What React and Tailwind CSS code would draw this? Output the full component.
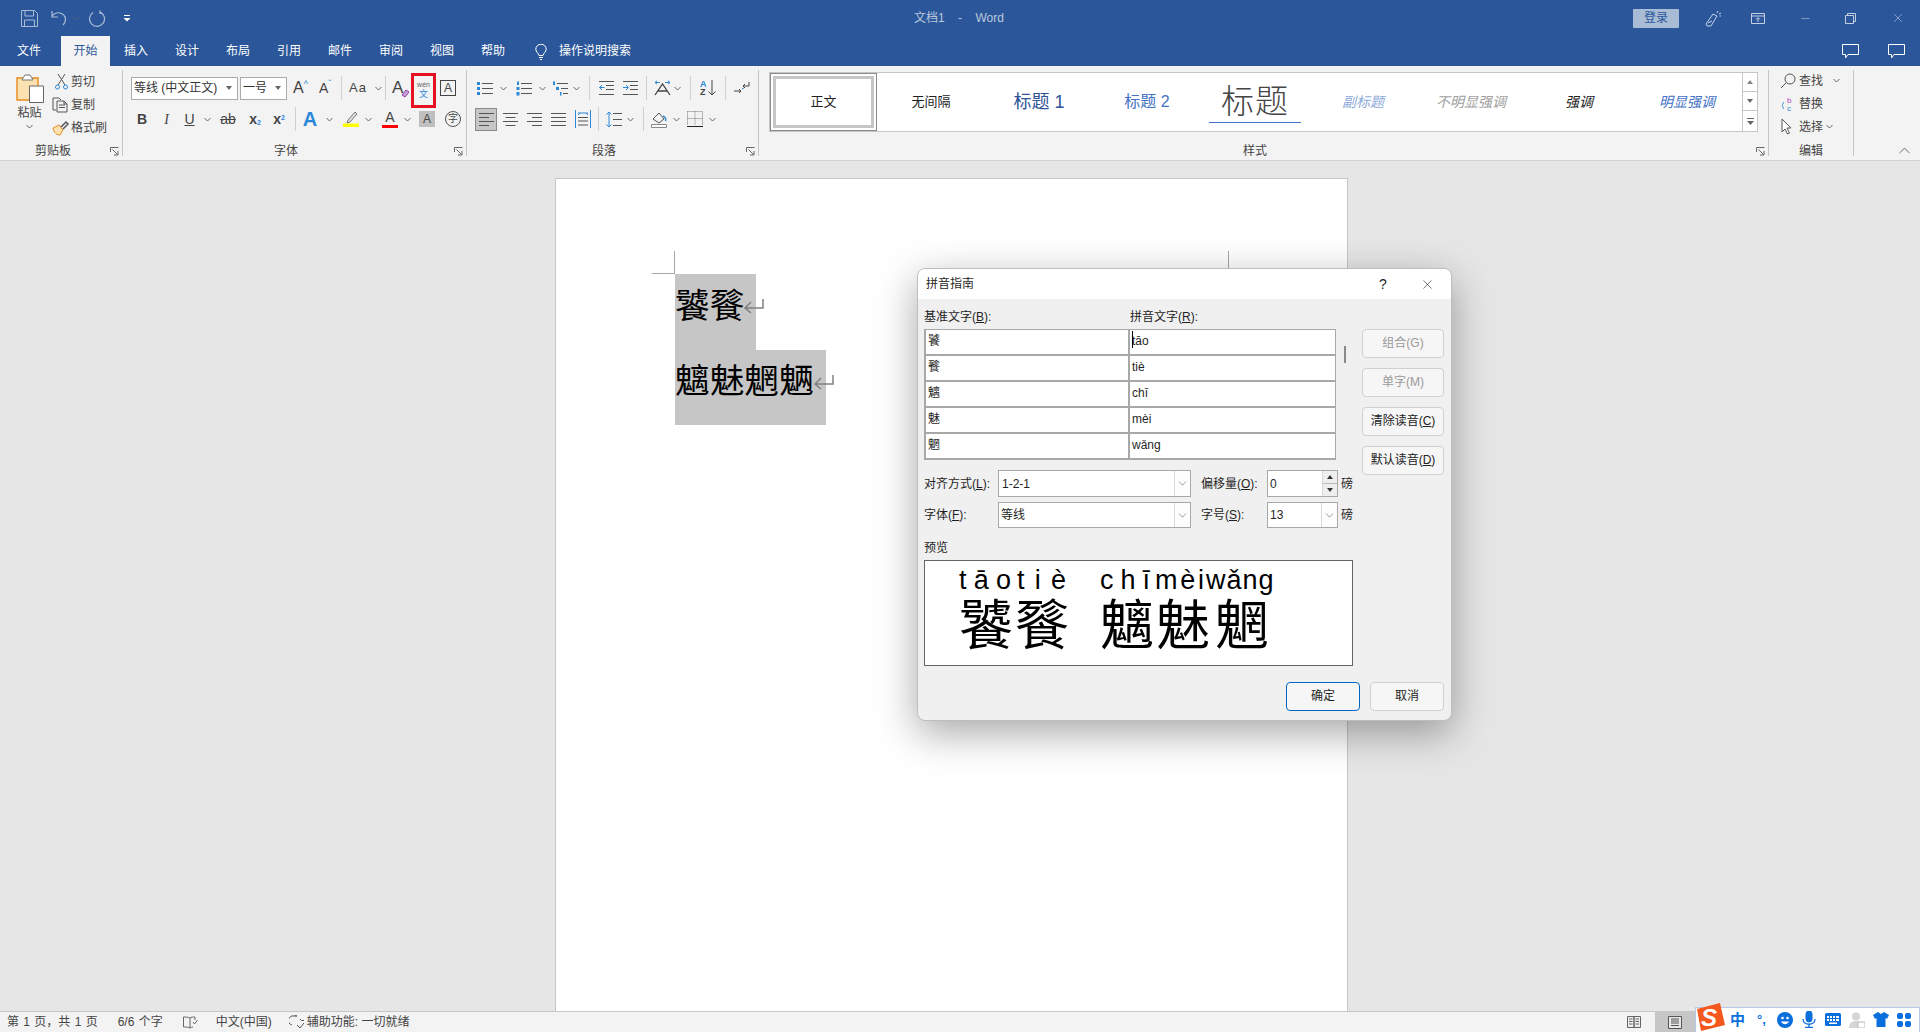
import React from "react";
import { ChevronDown, ChevronUp, X, Minus } from "lucide-react";

const FONT = "font-['Liberation_Sans','Noto_Sans_CJK_SC',sans-serif]";

const Chev = ({ className = "" }) => (
  <svg width="7" height="5" viewBox="0 0 7 5" className={`shrink-0 ${className}`} fill="none" stroke="#666" strokeWidth="1">
    <path d="M.5 1 3.5 4 6.5 1" />
  </svg>
);

const Sep = ({ h = "h-[86px]" }) => <div className={`${h} w-px bg-[#c6c6c6] shrink-0`}></div>;
const Tiny = () => <div className="h-[24px] w-px bg-[#d0d0d0] shrink-0"></div>;

const Launcher = () => (
  <svg width="9" height="9" viewBox="0 0 9 9" className="absolute right-[3px] top-[7px]" fill="none" stroke="#666" strokeWidth="1">
    <path d="M.5 5V.5H8.5M2.5 2.5 7.5 7.5M4 8H8V4" />
  </svg>
);

const Group = ({ label, w, pad = "pr-[17px]", children }) => (
  <div className={`flex flex-col h-[90px] shrink-0 ${w}`}>
    <div className="flex-1 min-h-0">{children}</div>
    <div className={`relative h-[20px] text-center text-[12px] leading-[22px] text-[#444] ${pad}`}>
      {label}
      <Launcher />
    </div>
  </div>
);

const Tabs = ["插入", "设计", "布局", "引用", "邮件", "审阅", "视图", "帮助"];

function TitleBar() {
  return (
    <div className="h-[36px] bg-[#2b579a] flex items-center shrink-0 text-[#b4c5dd]">
      <svg width="17" height="17" viewBox="0 0 17 17" className="ml-[21px]" fill="none" stroke="#a9bcd6" strokeWidth="1">
        <path d="M.5.5H13.5L16.5 3.5V16.5H.5ZM4 .5V6H12.5V.5M3.5 16.5V10H13.5V16.5" />
      </svg>
      <svg width="17" height="16" viewBox="0 0 17 16" className="ml-[13px]" fill="none" stroke="#a9bcd6" strokeWidth="1.2">
        <path d="M1 1V7H7M1 6.5C3 3 7 2 10.5 3.5 15 5.5 16 10.5 12 15" />
      </svg>
      <Chev className="ml-[4px] opacity-70" />
      <svg width="17" height="17" viewBox="0 0 17 17" className="ml-[10px]" fill="none" stroke="#a9bcd6" strokeWidth="1.2">
        <path d="M11.5 2.2A7.5 7.5 0 1 1 4 2.5M11 .5V3.5H14" />
      </svg>
      <svg width="8" height="8" viewBox="0 0 8 8" className="ml-[17px]" fill="#fff">
        <path d="M1 1H7V2H1ZM.5 4H7.5L4 7.5Z" />
      </svg>
      <div className="ml-[753px] w-[150px] text-center text-[12px] text-[#b9c8de] whitespace-pre">文档1    -    Word</div>
      <div className="ml-[599px] w-[46px] h-[19px] bg-[#a9bcd6] rounded-[1px] text-center text-[12px] leading-[19px] text-[#2b579a]">登录</div>
      <svg width="17" height="17" viewBox="0 0 17 17" className="ml-[26px]" fill="none" stroke="#c3d0e3" strokeWidth="1">
        <path d="M1 14 8 4 12 6 6 16 2 16ZM13 1 12 3M16 3 14 4M16 6H14.5M3 13 7 11" />
      </svg>
      <svg width="14" height="11" viewBox="0 0 14 11" className="ml-[29px]" fill="none" stroke="#c3d0e3" strokeWidth="1">
        <path d="M.5.5H13.5V10.5H.5ZM.5 3H13.5M7 9V5M5 6.5 7 4.5 9 6.5" />
      </svg>
      <Minus size={13} strokeWidth={1} color="#c3d0e3" className="ml-[34px]" />
      <svg width="11" height="11" viewBox="0 0 11 11" className="ml-[33px]" fill="none" stroke="#c3d0e3" strokeWidth="1">
        <path d="M.5 2.5H8.5V10.5H.5ZM2.5 2.5V.5H10.5V8.5H8.5" />
      </svg>
      <X size={14} strokeWidth={1} color="#c3d0e3" className="ml-[35px]" />
    </div>
  );
}

function TabBar() {
  return (
    <div className="h-[30px] bg-[#2b579a] flex items-stretch text-[12px] text-white shrink-0">
      <div className="w-[61px] pl-[17px] leading-[30px]">文件</div>
      <div className="w-[49px] bg-[#f3f3f3] text-[#2b579a] text-center leading-[30px]">开始</div>
      <div className="flex pl-[14px]">
        {Tabs.map((t) => (
          <div key={t} className="w-[51px] leading-[30px]">{t}</div>
        ))}
      </div>
      <svg width="12" height="16" viewBox="0 0 12 16" className="ml-[3px] mt-[8px]" fill="none" stroke="#fff" strokeWidth="1">
        <path d="M4 11.5C3.5 9 .8 8 .8 5.2A5.2 5 0 0 1 11.2 5.2C11.2 8 8.5 9 8 11.5ZM4 13.5H8M5 15.5H7" />
      </svg>
      <div className="ml-[12px] leading-[30px] text-[#fff]">操作说明搜索</div>
      <svg width="17" height="15" viewBox="0 0 17 15" className="ml-[1211px] mt-[8px]" fill="none" stroke="#fff" strokeWidth="1">
        <path d="M.5.5H16.5V10.5H6L3.5 14V10.5H.5Z" />
      </svg>
      <svg width="17" height="15" viewBox="0 0 17 15" className="ml-[29px] mt-[8px]" fill="none" stroke="#fff" strokeWidth="1">
        <path d="M.5.5H16.5V10.5H6L3.5 14V10.5H.5Z" />
      </svg>
    </div>
  );
}

function Clipboard() {
  return (
    <Group label="剪贴板" w="w-[118px]" pad="pr-[20px]">
      <div className="flex pl-[7px] h-full">
        <div className="w-[37px] flex flex-col items-center text-[12px] text-[#444]">
          <svg width="28" height="30" viewBox="0 0 28 30" className="mt-[3px]" fill="none">
            <path d="M1 5H22V27H1Z" fill="#fbe2b0" stroke="#e8891c" strokeWidth="1.4" />
            <path d="M7 5 9 2H14L16 5 17 7H6Z" fill="#fff" stroke="#777" />
            <path d="M13.5 13H27.5V29.5H13.5Z" fill="#fff" stroke="#666" />
          </svg>
          <div className="leading-[16px] mt-[2px]">粘贴</div>
          <Chev className="mt-[3px]" />
        </div>
        <div className="pl-[4px] text-[12px] text-[#444]">
          <div className="flex items-center h-[23px]">
            <svg width="16" height="17" viewBox="0 0 16 17" fill="none" className="ml-[2px]">
              <path d="M4 1 11 12M11 1 4 12" stroke="#555" />
              <circle cx="3.5" cy="14" r="2" stroke="#2b88d8" />
              <circle cx="11.5" cy="14" r="2" stroke="#2b88d8" />
            </svg>
            <span className="ml-[1px]">剪切</span>
          </div>
          <div className="flex items-center h-[23px]">
            <svg width="17" height="16" viewBox="0 0 17 16" fill="none" stroke="#555">
              <path d="M4 13H1V1H7L9 3M5 4H12L15 7V15H5ZM7 8H13M7 10.500H13M12 4V7H15" />
            </svg>
            <span className="ml-[2px]">复制</span>
          </div>
          <div className="flex items-center h-[23px]">
            <svg width="17" height="16" viewBox="0 0 17 16" fill="none">
              <path d="M1 8 7 5 11 10 8 15C5 15 2 13 1 8Z" fill="#fbe2b0" stroke="#e8891c" />
              <path d="M9 7 14 2 16 4 11 9" stroke="#555" strokeWidth="1.5" />
            </svg>
            <span className="ml-[2px]">格式刷</span>
          </div>
        </div>
      </div>
    </Group>
  );
}

function FontGroup() {
  return (
    <Group label="字体" w="w-[343px]">
      <div className="flex items-center h-[36px] pl-[8px] text-[#444]">
        <div className="w-[107px] h-[23px] bg-white border border-[#ababab] flex items-center pl-[2px] text-[12px] text-[#333] whitespace-nowrap">
          等线 (中文正文)
          <svg width="6" height="4" viewBox="0 0 6 4" className="ml-auto mr-[5px]" fill="#666"><path d="M0 0H6L3 4Z" /></svg>
        </div>
        <div className="w-[47px] h-[23px] ml-[2px] bg-white border border-[#ababab] flex items-center pl-[2px] text-[12px] text-[#333]">
          一号
          <svg width="6" height="4" viewBox="0 0 6 4" className="ml-auto mr-[5px]" fill="#666"><path d="M0 0H6L3 4Z" /></svg>
        </div>
        <div className="w-[23px] ml-[6px] flex items-start text-[16px] leading-[16px]">A<span className="text-[9px] leading-[9px] text-[#2b88d8]">^</span></div>
        <div className="w-[22px] ml-[3px] flex items-start text-[14px] leading-[16px]">A<span className="text-[9px] leading-[7px] text-[#2b88d8]">ˇ</span></div>
        <Tiny />
        <div className="ml-[7px] w-[26px] text-[13px] tracking-[1px]">Aa</div>
        <Chev />
        <div className="ml-[3px]"><Tiny /></div>
        <div className="relative ml-[6px] w-[20px] text-[17px] leading-[18px]">
          A
          <svg width="9" height="9" viewBox="0 0 9 9" className="absolute left-[9px] top-[10px]" fill="#c79dd6" stroke="#8e44ad"><path d="M1 6 5 1 8 3 4 8Z" /></svg>
        </div>
        <div className="ml-[-1px] w-[25px] h-[35px] border-[3px] border-[#e81123] flex flex-col items-center justify-center mt-[4px]">
          <span className="text-[7px] leading-[8px] text-[#666]">wén</span>
          <span className="text-[9px] leading-[10px] text-[#2b88d8]">文</span>
        </div>
        <div className="ml-[4px] w-[16px] h-[16px] border border-[#444] text-center text-[12px] leading-[14px]">A</div>
      </div>
      <div className="flex items-center h-[26px] text-[#444]">
        <div className="w-[26px] ml-[6px] text-center text-[14px] font-bold">B</div>
        <div className="w-[23px] text-center text-[14px] italic font-['Liberation_Serif',serif]">I</div>
        <div className="w-[23px] text-center text-[14px] underline">U</div>
        <Chev className="ml-[3px]" />
        <div className="w-[30px] ml-[2px] text-center text-[14px] line-through">ab</div>
        <div className="w-[24px] text-center text-[14px] font-bold">x<sub className="text-[7px] text-[#2b88d8]">2</sub></div>
        <div className="w-[24px] text-center text-[14px] font-bold">x<sup className="text-[7px] text-[#2b88d8]">2</sup></div>
        <div className="w-[1px] h-[24px] bg-[#d0d0d0] ml-[4px]"></div>
        <div className="w-[30px] ml-[-1px] text-center text-[20px] leading-[20px] font-bold text-[#2b88d8]">A</div>
        <Chev className="ml-[1px]" />
        <svg width="16" height="16" viewBox="0 0 16 16" className="ml-[10px]" fill="none">
          <path d="M5 9 12 1 14 3 7 11 4 12Z" fill="#ddd" stroke="#777" />
          <path d="M0 12.500H16V16H0Z" fill="#ffff00" />
        </svg>
        <Chev className="ml-[6px]" />
        <div className="flex flex-col items-center w-[16px] ml-[10px]">
          <span className="text-[14px] leading-[13px]">A</span>
          <span className="w-[16px] h-[3px] bg-[#ff0000] mt-[1px]"></span>
        </div>
        <Chev className="ml-[6px]" />
        <div className="ml-[8px] w-[16px] h-[16px] bg-[#bfbfbf] text-center text-[12px] leading-[16px]">A</div>
        <div className="ml-[10px] w-[16px] h-[16px] rounded-full border border-[#555] text-center text-[10px] leading-[14px]">字</div>
      </div>
    </Group>
  );
}

const Bullets = () => (
  <svg width="16" height="15" viewBox="0 0 16 15" fill="none">
    <path d="M0 1H3V4H0ZM0 6H3V9H0ZM0 11H3V14H0Z" fill="#2b88d8" />
    <path d="M5 2.500H16M5 7.500H16M5 12.500H16" stroke="#555" />
  </svg>
);
const Numbered = () => (
  <svg width="16" height="15" viewBox="0 0 16 15" fill="none">
    <path d="M1 0.500H3V4H1ZM0.500 6H3.500V9H0.500ZM0.500 11H3.500V14.500H0.500Z" fill="#2b88d8" />
    <path d="M5 2.500H16M5 7.500H16M5 12.500H16" stroke="#555" />
  </svg>
);
const Multi = () => (
  <svg width="16" height="15" viewBox="0 0 16 15" fill="none">
    <path d="M1 0.500H3V4H1ZM4 6H7V9H4ZM8 11H9.500V14.500H8Z" fill="#2b88d8" />
    <path d="M5 2.500H16M9 7.500H16M11 12.500H16" stroke="#555" />
  </svg>
);
const Indent = ({ flip }) => (
  <svg width="15" height="14" viewBox="0 0 15 14" fill="none">
    <path d="M0 .5H15M7 4.500H15M7 8.500H15M0 13.500H15" stroke="#555" />
    {flip ? (
      <path d="M0 6.500H5M3 4 5.500 6.500 3 9" stroke="#2b88d8" />
    ) : (
      <path d="M5.500 6.500H.5M3 4 .5 6.500 3 9" stroke="#2b88d8" />
    )}
  </svg>
);
const Align = ({ lines }) => (
  <svg width="15" height="14" viewBox="0 0 15 14" fill="none" stroke="#555">
    <path d={lines} />
  </svg>
);

function ParaGroup() {
  return (
    <Group label="段落" w="w-[291px]">
      <div className="flex items-center h-[36px] text-[#444]">
        <div className="ml-[10px]"><Bullets /></div>
        <Chev className="ml-[7px]" />
        <div className="ml-[9px]"><Numbered /></div>
        <Chev className="ml-[7px]" />
        <div className="ml-[6px]"><Multi /></div>
        <Chev className="ml-[5px]" />
        <div className="ml-[9px]"><Tiny /></div>
        <div className="ml-[9px]"><Indent /></div>
        <div className="ml-[9px]"><Indent flip /></div>
        <div className="ml-[8px]"><Tiny /></div>
        <svg width="17" height="16" viewBox="0 0 17 16" className="ml-[7px]" fill="none">
          <path d="M1 2.500H6M1 2.500 3 .8M1 2.500 3 4.200M11 2.500H16M16 2.500 14 .8M16 2.500 14 4.200" stroke="#2b88d8" />
          <path d="M1 15 8.500 4 16 15M4 11H13" stroke="#444" strokeWidth="1.3" />
        </svg>
        <Chev className="ml-[3px]" />
        <div className="ml-[9px]"><Tiny /></div>
        <div className="ml-[9px] w-[18px] flex items-center">
          <span className="text-[9px] leading-[8px] font-bold"><span className="text-[#2b88d8]">A</span><br />Z</span>
          <svg width="8" height="16" viewBox="0 0 8 16" fill="none" stroke="#444" className="ml-[1px]"><path d="M4 0V15M.5 11.500 4 15 7.500 11.500" /></svg>
        </div>
        <div className="ml-[7px]"><Tiny /></div>
        <svg width="17" height="15" viewBox="0 0 17 15" className="ml-[7px]" fill="none" stroke="#444">
          <path d="M16 1V5H10M12 3 10 5 12 7M1 10H8M6 8 8 10 6 12" />
          <path d="M9 8 11 7" stroke="#2b88d8" />
        </svg>
      </div>
      <div className="flex items-center h-[26px]">
        <div className="ml-[8px] w-[22px] h-[23px] bg-[#c6c6c6] border border-[#8a8a8a] flex items-center justify-center">
          <Align lines="M0 1.500H15M0 5.500H10M0 9.500H15M0 13.500H10" />
        </div>
        <div className="ml-[6px]"><Align lines="M0 1.500H15M2.500 5.500H12.500M0 9.500H15M2.500 13.500H12.500" /></div>
        <div className="ml-[9px]"><Align lines="M0 1.500H15M5 5.500H15M0 9.500H15M5 13.500H15" /></div>
        <div className="ml-[9px]"><Align lines="M0 1.500H15M0 5.500H15M0 9.500H15M0 13.500H15" /></div>
        <svg width="16" height="18" viewBox="0 0 16 18" className="ml-[9px]" fill="none">
          <path d="M.5 0V18M15.500 0V18" stroke="#2b88d8" />
          <path d="M3 3H13M5 3 3 5M11 3 13 5" stroke="#2b88d8" />
          <path d="M3 7.500H13M3 11H13M3 15H13" stroke="#555" />
        </svg>
        <div className="ml-[7px]"><Tiny /></div>
        <svg width="16" height="17" viewBox="0 0 16 17" className="ml-[7px]" fill="none">
          <path d="M3 1V16M.5 3.500 3 1 5.500 3.500M.5 13.500 3 16 5.500 13.500" stroke="#2b88d8" />
          <path d="M7 2.500H16M7 8.500H16M7 14.500H16" stroke="#555" />
        </svg>
        <Chev className="ml-[5px]" />
        <div className="ml-[9px]"><Tiny /></div>
        <svg width="16" height="17" viewBox="0 0 16 17" className="ml-[7px]" fill="none">
          <path d="M2 8 8 2 13 8 8 12Z" stroke="#555" />
          <path d="M12 5C15 6 15 9 14.500 10" stroke="#2b88d8" strokeWidth="1.5" />
          <path d="M.5 13.500H15.500V16.500H.5Z" fill="#fff" stroke="#888" />
        </svg>
        <Chev className="ml-[6px]" />
        <svg width="16" height="16" viewBox="0 0 16 16" className="ml-[7px]" fill="none">
          <path d="M.5.5H15.500V14M.5.500V14M8 .5V14M.5 7.500H15.500" stroke="#777" strokeDasharray="1 1" />
          <path d="M0 15.500H16" stroke="#222" />
        </svg>
        <Chev className="ml-[6px]" />
      </div>
    </Group>
  );
}

const Styles = [
  ["无间隔", "text-[13px] text-[#222]"],
  ["标题 1", "text-[18px] text-[#2f5496]"],
  ["标题 2", "text-[16px] text-[#4472c4]"],
  ["标题", "text-[33px] font-light text-[#444] tracking-[1px]"],
  ["副标题", "text-[14px] italic text-[#8eaadb]"],
  ["不明显强调", "text-[14px] italic text-[#a0a0a0]"],
  ["强调", "text-[14px] italic text-[#222]"],
  ["明显强调", "text-[14px] italic text-[#4472c4]"],
];

function StylesGroup() {
  return (
    <Group label="样式" w="w-[1009px]">
      <div className="flex mt-[2px] ml-[10px] h-[60px] w-[989px] bg-white border border-[#c6c6c6]">
        <div className="w-[107px] h-full bg-white border border-[#8a8a8a] flex items-center justify-center shrink-0">
          <div className="w-[101px] h-[52px] border-[3px] border-[#c6c6c6] text-center text-[13px] leading-[46px] text-[#222]">正文</div>
        </div>
        {Styles.map(([t, c]) => (
          <div key={t} className={`w-[108px] shrink-0 flex items-center justify-center whitespace-nowrap ${c}`}>
            {t === "标题" ? <span className="border-b-[1.500px] border-[#4472c4] px-[12px] leading-[40px]">{t}</span> : t}
          </div>
        ))}
        <div className="ml-auto w-[15px] shrink-0 flex flex-col border-l border-[#c6c6c6]">
          <div className="h-[19px] border-b border-[#c6c6c6] flex items-center justify-center">
            <svg width="6" height="4" viewBox="0 0 6 4" fill="#888"><path d="M0 4H6L3 0Z" /></svg>
          </div>
          <div className="h-[19px] border-b border-[#c6c6c6] flex items-center justify-center">
            <svg width="6" height="4" viewBox="0 0 6 4" fill="#666"><path d="M0 0H6L3 4Z" /></svg>
          </div>
          <div className="flex-1 flex items-center justify-center">
            <svg width="7" height="7" viewBox="0 0 7 7" fill="#666"><path d="M0 0H7V1H0ZM0 3H7L3.500 7Z" /></svg>
          </div>
        </div>
      </div>
    </Group>
  );
}

function EditGroup() {
  return (
    <div className="flex flex-col h-[90px] w-[84px] shrink-0 text-[12px] text-[#444]">
      <div className="flex-1 pl-[11px] mt-[-1px]">
        <div className="flex items-center h-[23px]">
          <svg width="16" height="16" viewBox="0 0 16 16" fill="none" stroke="#555">
            <circle cx="10" cy="6" r="5" />
            <path d="M6 10 1 15" />
          </svg>
          <span className="ml-[3px]">查找</span>
          <Chev className="ml-[10px]" />
        </div>
        <div className="flex items-center h-[23px]">
          <svg width="16" height="16" viewBox="0 0 16 16" fill="none">
            <path d="M4 6C2 8 2 11 4 13" stroke="#2b88d8" />
            <text x="7" y="7" fontSize="8" fill="#b146c2">b</text>
            <text x="7" y="15" fontSize="8" fill="#2b88d8">c</text>
          </svg>
          <span className="ml-[3px]">替换</span>
        </div>
        <div className="flex items-center h-[23px]">
          <svg width="12" height="17" viewBox="0 0 12 17" fill="#fff" stroke="#555" className="ml-[1px]">
            <path d="M1 1V14L4 11 6.500 16 8.500 15 6 10H10Z" />
          </svg>
          <span className="ml-[6px]">选择</span>
          <Chev className="ml-[3px]" />
        </div>
      </div>
      <div className="h-[20px] text-center leading-[22px]">编辑</div>
    </div>
  );
}

function Ribbon() {
  return (
    <div className="h-[95px] bg-[#f3f3f3] border-b border-[#d2d2d2] flex shrink-0 pt-[4px]">
      <div className="w-[4px] shrink-0"></div>
      <Clipboard />
      <Sep />
      <FontGroup />
      <Sep />
      <ParaGroup />
      <Sep />
      <StylesGroup />
      <Sep />
      <EditGroup />
      <Sep />
      <div className="flex-1 flex items-end pl-[41px]">
        <ChevronUp size={19} strokeWidth={1} color="#444" />
      </div>
    </div>
  );
}

const ReturnMark = () => (
  <svg width="20" height="16" viewBox="0 0 20 16" fill="none" stroke="#808080" strokeWidth="1.500" className="shrink-0">
    <path d="M19 1V10H1M7 4 1 10 7 15" />
  </svg>
);

function Page() {
  return (
    <div className="relative ml-[555px] mt-[17px] w-[793px] h-[900px] bg-white border border-[#c6c6c6] border-b-0 pl-[119px] pt-[95px]">
      <div className="absolute left-[96px] top-[72px] w-[23px] h-[23px] border-r border-b border-[#a6a6a6]"></div>
      <div className="absolute left-[672px] top-[72px] w-[1px] h-[23px] bg-[#a6a6a6]"></div>
      <div className={`w-[81px] h-[76px] pb-[12px] bg-[#c6c6c6] flex items-center text-[34.670px] text-black leading-none whitespace-nowrap ${FONT}`}>
        饕餮
        <ReturnMark />
      </div>
      <div className={`w-[151px] h-[75px] pb-[12px] bg-[#c6c6c6] flex items-center text-[34.670px] text-black leading-none whitespace-nowrap ${FONT}`}>
        魑魅魍魉
        <ReturnMark />
      </div>
    </div>
  );
}

const DlgBtn = ({ children, disabled }) => (
  <div className={`w-[82px] h-[29px] bg-[#f6f6f6] border border-[#d0d0d0] rounded-[4px] text-center text-[12px] leading-[27px] ${disabled ? "text-[#9a9a9a]" : "text-[#222]"}`}>
    {children}
  </div>
);

const Rows = [
  ["饕", "tāo"],
  ["餮", "tiè"],
  ["魑", "chī"],
  ["魅", "mèi"],
  ["魍", "wǎng"],
];

const DropArrow = ({ w = "w-[16px]" }) => (
  <div className={`${w} h-full bg-[#fdfdfd] border-l border-[#d8d8d8] flex items-center justify-center shrink-0`}>
    <ChevronDown size={13} strokeWidth={1} color="#444" />
  </div>
);

// one pinyin syllable spread over the width of its character
const Syllable = ({ text, className }) => (
  <div className={`flex justify-between ${className}`}>
    {[...text].map((ch, i) => (
      <span key={i}>{ch}</span>
    ))}
  </div>
);

function RubyDialog() {
  return (
    <div className="absolute left-[917px] top-[268px] w-[535px] h-[453px] bg-[#f0f0f0] rounded-[8px] border border-[#bdbdbd] shadow-[0_12px_40px_rgba(0,0,0,0.35)] overflow-hidden text-[12px] text-[#1f1f1f] flex flex-col">
      <div className="h-[30px] bg-white flex items-center pl-[8px] shrink-0">
        <span className="whitespace-nowrap shrink-0">拼音指南</span>
        <span className="ml-[405px] text-[14px]">?</span>
        <X size={15} strokeWidth={1} color="#222" className="ml-[33px] shrink-0" />
      </div>
      <div className="flex pl-[6px] pt-[10px]">
        <div className="w-[429px]">
          <div className="flex h-[20px] leading-[16px]">
            <div className="w-[206px]">基准文字(<u>B</u>):</div>
            <div>拼音文字(<u>R</u>):</div>
          </div>
          <div className="flex">
            <div className="w-[412px] border-t border-l-2 border-[#a8a8a8]">
              {Rows.map(([c, p], i) => (
                <div key={c} className="flex h-[26px] border-b-2 border-r border-[#a8a8a8] bg-white">
                  <div className="w-[204px] border-r-2 border-[#a8a8a8] pl-[2px] leading-[22px]">{c}</div>
                  <div className="relative pl-[2px] leading-[22px]">
                    {i === 0 && <span className="absolute left-[2px] top-[1px] w-px h-[17px] bg-black"></span>}
                    {p}
                  </div>
                </div>
              ))}
            </div>
            <div className="ml-[8px] mt-[17px] w-[2px] h-[17px] bg-[#8a8a8a]"></div>
          </div>
          <div className="flex items-center h-[27px] mt-[10px]">
            <div className="w-[74px]">对齐方式(<u>L</u>):</div>
            <div className="w-[193px] h-full bg-white border border-[#a8a8a8] flex justify-between pl-[3px] items-center">
              1-2-1
              <DropArrow />
            </div>
            <div className="ml-[10px] w-[66px]">偏移量(<u>O</u>):</div>
            <div className="w-[71px] h-full bg-white border border-[#a8a8a8] flex justify-between pl-[2px] items-center">
              0
              <div className="w-[15px] h-full flex flex-col border-l border-[#d8d8d8]">
                <div className="flex-1 bg-[#eeeeee] border-b border-[#bbb] flex items-center justify-center">
                  <svg width="6" height="4" viewBox="0 0 6 4" fill="#333"><path d="M0 4H6L3 0Z" /></svg>
                </div>
                <div className="flex-1 bg-[#eeeeee] flex items-center justify-center">
                  <svg width="6" height="4" viewBox="0 0 6 4" fill="#333"><path d="M0 0H6L3 4Z" /></svg>
                </div>
              </div>
            </div>
            <div className="ml-[3px]">磅</div>
          </div>
          <div className="flex items-center h-[26px] mt-[5px]">
            <div className="w-[74px]">字体(<u>F</u>):</div>
            <div className="w-[193px] h-full bg-white border border-[#a8a8a8] flex justify-between pl-[2px] items-center">
              等线
              <DropArrow />
            </div>
            <div className="ml-[10px] w-[66px]">字号(<u>S</u>):</div>
            <div className="w-[71px] h-full bg-white border border-[#a8a8a8] flex justify-between pl-[2px] items-center">
              13
              <DropArrow />
            </div>
            <div className="ml-[3px]">磅</div>
          </div>
          <div className="mt-[11px] h-[19px] leading-[18px]">预览</div>
          <div className={`w-[429px] h-[106px] mt-[2px] bg-white border border-[#646464] pl-[34px] pt-[4px] text-black ${FONT}`}>
            <div className="flex h-[31px] text-[27px] leading-[31px] whitespace-nowrap">
              <Syllable text="tāo" className="w-[52px]" />
              <Syllable text="tiè" className="w-[49px] ml-[6px]" />
              <Syllable text="chī" className="w-[50px] ml-[34px]" />
              <Syllable text="mèi" className="w-[49px] ml-[5px]" />
              <span className="ml-[2px] tracking-[1px]">wǎng</span>
            </div>
            <div className="flex text-[54px] leading-[60px]">
              <span className="w-[56px]">饕</span>
              <span className="w-[85px]">餮</span>
              <span className="w-[56px]">魑</span>
              <span className="w-[59px]">魅</span>
              <span>魍</span>
            </div>
          </div>
        </div>
        <div className="ml-[9px] mt-[20px] flex flex-col gap-[10px]">
          <DlgBtn disabled>组合(G)</DlgBtn>
          <DlgBtn disabled>单字(M)</DlgBtn>
          <DlgBtn>清除读音(<u>C</u>)</DlgBtn>
          <DlgBtn>默认读音(<u>D</u>)</DlgBtn>
        </div>
      </div>
      <div className="flex justify-end gap-[10px] pr-[7px] mt-[16px]">
        <div className="w-[74px] h-[29px] bg-[#f6f6f6] border-[1.500px] border-[#0067c0] rounded-[4px] text-center leading-[26px]">确定</div>
        <div className="w-[74px] h-[29px] bg-[#f6f6f6] border border-[#d0d0d0] rounded-[4px] text-center leading-[27px]">取消</div>
      </div>
    </div>
  );
}

function StatusBar() {
  return (
    <div className="h-[21px] bg-[#f3f3f3] border-t border-[#c6c6c6] flex items-center text-[12px] text-[#444] shrink-0">
      <span className="ml-[7px] whitespace-pre [word-spacing:1px]">第 1 页，共 1 页</span>
      <span className="ml-[20px] [word-spacing:1px]">6/6 个字</span>
      <svg width="15" height="13" viewBox="0 0 15 13" className="ml-[20px]" fill="none" stroke="#666">
        <path d="M7 2 C5 1 3 1 .5 1V11C3 11 5 11 7 12V2C8 1 10 1 12 1V4M7 12C8 11.500 9 11 10 11M10 6 11.500 8 14.500 4" />
      </svg>
      <span className="ml-[18px]">中文(中国)</span>
      <svg width="16" height="14" viewBox="0 0 16 14" className="ml-[17px]" fill="none" stroke="#555">
        <path d="M8 1H5A4.500 4.500 0 0 0 3 10M8 1 6 .5M11 4 12.500 5.500H15M8 10 11 13 15 8" />
      </svg>
      <span className="ml-[2px]">辅助功能: 一切就绪</span>
      <svg width="14" height="12" viewBox="0 0 14 12" className="ml-[1218px]" fill="#eee" stroke="#666">
        <path d="M.5.5H7V11.500H.5ZM7 .5H13.500V11.500H7ZM2 3H5.500M2 5.500H5.500M2 8H5.500M8.500 3H12M8.500 5.500H12M8.500 8H12" />
      </svg>
      <div className="ml-[14px] w-[40px] h-full bg-[#c6c6c6] flex items-center justify-center">
        <svg width="14" height="13" viewBox="0 0 14 13" fill="#e8e8e8" stroke="#555">
          <path d="M.5.5H13.500V12.500H.5ZM3 3H11M3 5H11M3 7H11M3 9.500H11" />
        </svg>
      </div>
      <ImeBar />
    </div>
  );
}

function ImeBar() {
  return (
    <div className="relative flex-1 h-[26px] mt-[-5px] bg-white border border-[#b6cbe8] flex items-center pl-[33px] text-[#0a6fdc]">
      <svg width="31" height="28" viewBox="0 0 31 28" className="absolute left-[-2px] top-[-5px]">
        <path d="M3 6 26 0 31 22 7 28Z" fill="#f4581e" />
        <text x="7" y="23" fontSize="24" fontWeight="bold" fontStyle="italic" fill="#fff" fontFamily="'Liberation Sans',sans-serif">S</text>
      </svg>
      <div className="flex items-center gap-[8px]">
        <span className="w-[16px] text-center text-[15px] font-bold leading-none">中</span>
        <span className="w-[16px] text-center text-[13px] font-bold leading-none">°,</span>
        <svg width="16" height="16" viewBox="0 0 16 16">
          <circle cx="8" cy="8" r="8" fill="#0a6fdc" />
          <circle cx="5.500" cy="6" r="1.300" fill="#fff" />
          <circle cx="10.500" cy="6" r="1.300" fill="#fff" />
          <path d="M4 9.500C6 13 10 13 12 9.500Z" fill="#fff" />
        </svg>
        <svg width="16" height="17" viewBox="0 0 16 17" fill="none" stroke="#0a6fdc">
          <rect x="5" y="0" width="6" height="11" rx="3" fill="#0a6fdc" />
          <path d="M2 8C2 15 14 15 14 8M8 13V16M4 16.500H12" strokeWidth="1.300" />
        </svg>
        <svg width="16" height="13" viewBox="0 0 16 13">
          <rect width="16" height="13" rx="1.500" fill="#0a6fdc" />
          <path d="M2 3H4V5H2ZM5 3H7V5H5ZM8 3H10V5H8ZM11 3H14V5H11ZM2 6H4V8H2ZM5 6H7V8H5ZM8 6H10V8H8ZM11 6H14V8H11ZM4 9.500H12V11H4Z" fill="#fff" />
        </svg>
        <svg width="16" height="16" viewBox="0 0 16 16" fill="#d5d5d5">
          <circle cx="7" cy="4.500" r="4" />
          <path d="M0 16C0 10 4 9 7 9S14 10 14 16Z" />
          <rect x="9" y="10" width="7" height="6" fill="#fff" stroke="#bbb" />
        </svg>
        <svg width="16" height="15" viewBox="0 0 16 15" fill="#0a6fdc">
          <path d="M5 0 8 2 11 0 16 3 14 7 12.500 6V15H3.500V6L2 7 0 3Z" />
        </svg>
        <svg width="14" height="14" viewBox="0 0 14 14" fill="#0a6fdc">
          <rect width="6" height="6" rx="2" />
          <rect x="8" width="6" height="6" rx="2" />
          <rect y="8" width="6" height="6" rx="2" />
          <rect x="8" y="8" width="6" height="6" rx="2" />
        </svg>
      </div>
    </div>
  );
}

export default function App() {
  return (
    <div className={`relative w-[1920px] h-[1032px] flex flex-col overflow-hidden bg-[#e6e6e6] ${FONT}`}>
      <TitleBar />
      <TabBar />
      <Ribbon />
      <div className="flex-1 min-h-0 overflow-hidden">
        <Page />
      </div>
      <StatusBar />
      <RubyDialog />
    </div>
  );
}
